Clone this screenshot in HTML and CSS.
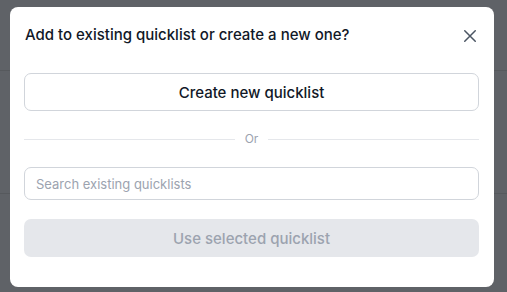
FILE: index.html
```html
<!DOCTYPE html>
<html lang="en">
<head>
<meta charset="utf-8">
<title>Quicklist</title>
<link rel="stylesheet" href="styles.css">
</head>
<body>
<div class="page">
  <div class="page-row row-top"></div>
  <div class="page-row row-mid"></div>
  <div class="page-row row-bottom"></div>
</div>
<div class="overlay">
  <div class="modal" role="dialog">
    <div class="modal-header">
      <h2 class="modal-title">Add to existing quicklist or create a new one?</h2>
      <button class="close-btn" aria-label="Close">
        <svg width="16" height="16" viewBox="0 0 16 16" fill="none" stroke="#4b5563" stroke-width="1.5" stroke-linecap="round">
          <path d="M2.75 2.75 L13.25 13.25 M13.25 2.75 L2.75 13.25"/>
        </svg>
      </button>
    </div>
    <button class="btn btn-outline">Create new quicklist</button>
    <div class="divider"><span class="divider-line"></span><span class="divider-text">Or</span><span class="divider-line"></span></div>
    <input class="search" type="text" placeholder="Search existing quicklists">
    <button class="btn btn-disabled" disabled>Use selected quicklist</button>
  </div>
</div>
</body>
</html>
```
FILE: styles.css
```css
html, body {
  margin: 0;
  padding: 0;
  height: 100%;
}
body {
  background: #5f6267;
  font-family: Inter, "Noto Sans", sans-serif;
  position: relative;
  overflow: hidden;
}
.page {
  display: flex;
  flex-direction: column;
}
.page-row {
  border-bottom: 1px solid #56595d;
}
.row-top { height: 70px; }
.row-mid { height: 122px; }
.row-bottom { height: 90px; border-bottom: none; }

.overlay {
  position: absolute;
  inset: 0;
  padding: 7px 13px 5px 10px;
  box-sizing: border-box;
}
.modal {
  background: #ffffff;
  border-radius: 8px;
  width: 484px;
  height: 280px;
  box-sizing: border-box;
  padding: 18px 15px 30px 14px;
  display: flex;
  flex-direction: column;
}
.modal-header {
  display: flex;
  align-items: center;
  justify-content: space-between;
  height: 20px;
  margin-bottom: 28px;
}
.modal-title {
  margin: 0 0 0 1px;
  font-size: 15px;
  font-weight: 500;
  line-height: 20px;
  color: #111827;
}
.close-btn {
  width: 16px;
  height: 16px;
  padding: 0;
  border: none;
  background: none;
  display: flex;
  margin-right: 1px;
  margin-top: 1px;
}
.btn {
  height: 38px;
  border-radius: 7px;
  font-family: Inter, "Noto Sans", sans-serif;
  font-size: 15px;
  font-weight: 500;
  width: 100%;
  box-sizing: border-box;
}
.btn-outline {
  background: #ffffff;
  border: 1px solid #d1d5db;
  color: #111827;
}
.btn-disabled {
  background: #e5e7eb;
  border: none;
  color: #9ca3af;
  margin-top: 19px;
}
.divider {
  display: flex;
  align-items: center;
  height: 20px;
  margin: 18px 0;
  gap: 10px;
}
.divider-line {
  flex: 1;
  height: 1px;
  background: #e5e7eb;
}
.divider-text {
  font-size: 12px;
  color: #9ca3af;
  line-height: 20px;
}
.search {
  height: 33px;
  border: 1px solid #d1d5db;
  border-radius: 7px;
  padding: 0 11px;
  font-family: Inter, "Noto Sans", sans-serif;
  font-size: 13px;
  color: #111827;
  box-sizing: border-box;
  width: 100%;
  outline: none;
}
.search::placeholder {
  color: #9ca3af;
}
```
